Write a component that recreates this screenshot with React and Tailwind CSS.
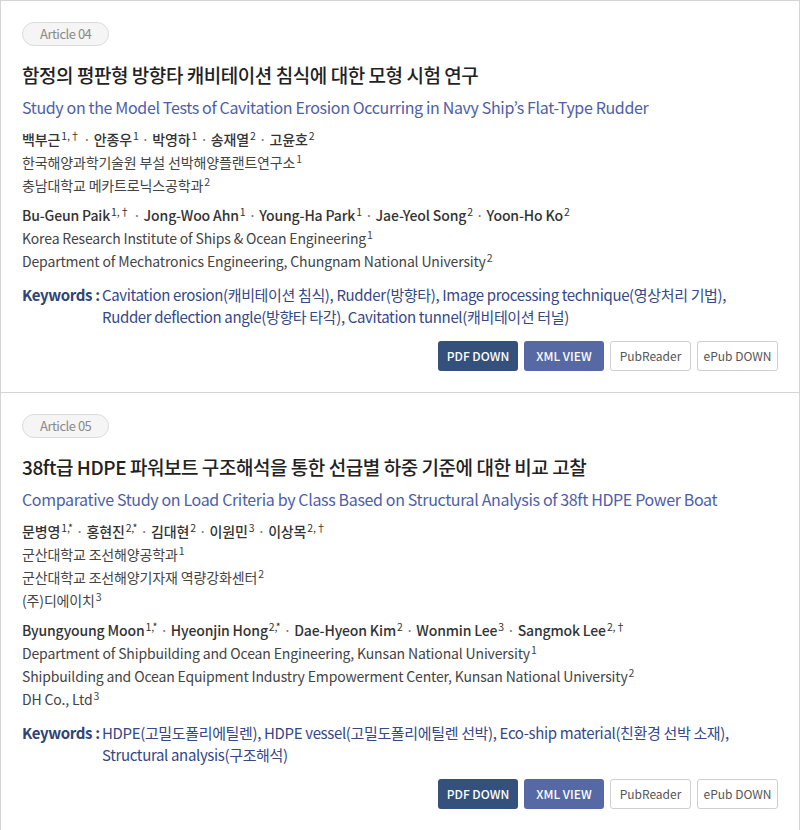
import React from 'react';

const articles = [
  {
    no: '04',
    titleKo: '함정의 평판형 방향타 캐비테이션 침식에 대한 모형 시험 연구',
    titleEn: 'Study on the Model Tests of Cavitation Erosion Occurring in Navy Ship’s Flat-Type Rudder',
    authorsKo: [
      ['백부근', '1,†'],
      ['안종우', '1'],
      ['박영하', '1'],
      ['송재열', '2'],
      ['고윤호', '2'],
    ],
    affilKo: [
      ['한국해양과학기술원 부설 선박해양플랜트연구소', '1'],
      ['충남대학교 메카트로닉스공학과', '2'],
    ],
    authorsEn: [
      ['Bu-Geun Paik', '1,†'],
      ['Jong-Woo Ahn', '1'],
      ['Young-Ha Park', '1'],
      ['Jae-Yeol Song', '2'],
      ['Yoon-Ho Ko', '2'],
    ],
    affilEn: [
      ['Korea Research Institute of Ships & Ocean Engineering', '1'],
      ['Department of Mechatronics Engineering, Chungnam National University', '2'],
    ],
    keywords: [
      'Cavitation erosion(캐비테이션 침식), Rudder(방향타), Image processing technique(영상처리 기법),',
      'Rudder deflection angle(방향타 타각), Cavitation tunnel(캐비테이션 터널)',
    ],
  },
  {
    no: '05',
    titleKo: '38ft급 HDPE 파워보트 구조해석을 통한 선급별 하중 기준에 대한 비교 고찰',
    titleEn: 'Comparative Study on Load Criteria by Class Based on Structural Analysis of 38ft HDPE Power Boat',
    authorsKo: [
      ['문병영', '1,*'],
      ['홍현진', '2,*'],
      ['김대현', '2'],
      ['이원민', '3'],
      ['이상목', '2,†'],
    ],
    affilKo: [
      ['군산대학교 조선해양공학과', '1'],
      ['군산대학교 조선해양기자재 역량강화센터', '2'],
      ['(주)디에이치', '3'],
    ],
    authorsEn: [
      ['Byungyoung Moon', '1,*'],
      ['Hyeonjin Hong', '2,*'],
      ['Dae-Hyeon Kim', '2'],
      ['Wonmin Lee', '3'],
      ['Sangmok Lee', '2,†'],
    ],
    affilEn: [
      ['Department of Shipbuilding and Ocean Engineering, Kunsan National University', '1'],
      ['Shipbuilding and Ocean Equipment Industry Empowerment Center, Kunsan National University', '2'],
      ['DH Co., Ltd', '3'],
    ],
    keywords: [
      'HDPE(고밀도폴리에틸렌), HDPE vessel(고밀도폴리에틸렌 선박), Eco-ship material(친환경 선박 소재),',
      'Structural analysis(구조해석)',
    ],
  },
];

const Sup = ({ children }) => <sup className="ml-[1px] font-normal">{children}</sup>;

const Authors = ({ list }) => (
  <p className="font-medium text-[#333]">
    {list.map(([name, mark], i) => (
      <React.Fragment key={name}>
        {i > 0 && <span className="text-[#777] font-normal"> · </span>}
        {name}
        <Sup>{mark}</Sup>
      </React.Fragment>
    ))}
  </p>
);

const Affils = ({ list }) =>
  list.map(([text, mark]) => (
    <p key={text} className="text-[#444]">
      {text}
      <Sup>{mark}</Sup>
    </p>
  ));

const Article = ({ a, last }) => (
  <article className={`px-[21px] pt-[21px] pb-[21px] ${last ? '' : 'border-b border-[#d5d5d5]'}`}>
    <div className="flex">
      <span className="flex items-center h-[24px] px-[17px] rounded-full bg-[#f5f5f5] border border-[#dcdcdc] text-[13px] text-[#8a8a8a] tracking-[-0.5px]">
        Article {a.no}
      </span>
    </div>

    <h2 className="mt-[15px] text-[19px] leading-[28px] font-medium text-[#222] tracking-[-0.45px]">
      {a.titleKo}
    </h2>
    <p className="mt-[6px] text-[16px] leading-[24px] text-[#4e5ea8] tracking-[-0.35px]">{a.titleEn}</p>

    <div className="mt-[9px] text-[14px] leading-[23px] tracking-[-0.15px]">
      <Authors list={a.authorsKo} />
      <Affils list={a.affilKo} />
    </div>

    <div className="mt-[7px] text-[14px] leading-[23px] tracking-[-0.15px]">
      <Authors list={a.authorsEn} />
      <Affils list={a.affilEn} />
    </div>

    <div className="mt-[11px] flex text-[15px] leading-[22px] tracking-[-0.35px]">
      <span className="font-bold text-[#2f4475] w-[80px] shrink-0">Keywords :</span>
      <div className="text-[#354887]">
        {a.keywords.map((k) => (
          <p key={k}>{k}</p>
        ))}
      </div>
    </div>

    <div className="mt-[13px] flex justify-end gap-[6px] text-[12px]">
      <button className="h-[30px] w-[80px] rounded-[3px] bg-[#34507c] text-white font-medium">PDF DOWN</button>
      <button className="h-[30px] w-[80px] rounded-[3px] bg-[#5669a5] text-white font-medium">XML VIEW</button>
      <button className="h-[30px] w-[81px] rounded-[3px] border border-[#cfcfcf] bg-white text-[#555]">PubReader</button>
      <button className="h-[30px] w-[81px] rounded-[3px] border border-[#cfcfcf] bg-white text-[#555]">ePub DOWN</button>
    </div>
  </article>
);

export default function App() {
  return (
    <div className="bg-white min-h-screen" style={{ fontFamily: '"Noto Sans CJK KR", "Noto Sans", sans-serif' }}>
      <div className="border border-[#d5d5d5] border-b-0">
        {articles.map((a, i) => (
          <Article key={a.no} a={a} last={i === articles.length - 1} />
        ))}
      </div>
    </div>
  );
}
